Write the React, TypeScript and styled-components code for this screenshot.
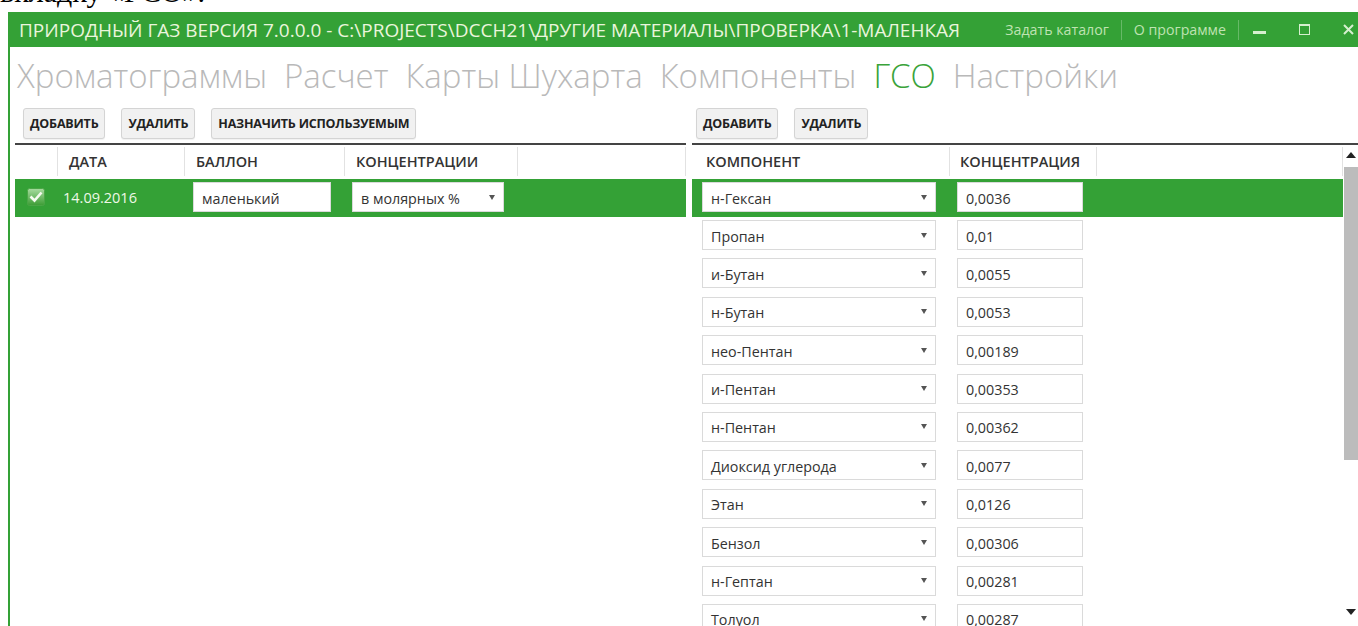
import styled, { createGlobalStyle } from 'styled-components';

const GREEN = '#34a136';

const GlobalStyle = createGlobalStyle`
  html, body {
    margin: 0;
    padding: 0;
    background: #fff;
    overflow: hidden;
  }
  body {
    font-family: 'Open Sans', 'Noto Sans', sans-serif;
    color: #333;
  }
`;

const Page = styled.div`
  width: 1358px;
  height: 626px;
  overflow: hidden;
  display: flex;
  flex-direction: column;
`;

const Caption = styled.div`
  flex: none;
  height: 12px;
  overflow: hidden;
`;

const CaptionText = styled.div`
  font-family: 'Liberation Serif', serif;
  font-size: 30px;
  line-height: 30px;
  margin-top: -23px;
  color: #000;
  white-space: nowrap;
`;

const Window = styled.div`
  flex: 1;
  min-height: 0;
  margin-left: 8px;
  display: flex;
  flex-direction: column;
`;

const TitleBar = styled.div`
  flex: none;
  height: 35px;
  background: ${GREEN};
  display: flex;
  align-items: center;
  padding-left: 11px;
`;

const Title = styled.div`
  font-size: 19px;
  color: #eaf5dc;
  white-space: nowrap;
`;

const TitleActions = styled.div`
  margin-left: auto;
  display: flex;
  align-items: center;
  height: 100%;
`;

const TitleLink = styled.span`
  font-size: 14.2px;
  color: #bfe3b2;
  white-space: nowrap;
`;

const TitleSep = styled.span`
  width: 1px;
  height: 20px;
  background: #67b967;
  margin: 0 12px;
`;

const Controls = styled.div`
  display: flex;
  align-items: center;
  gap: 33px;
  padding: 0 4px 0 2px;
`;

const Minimize = styled.span`
  width: 13px;
  height: 3px;
  margin-top: 6px;
  background: #d6efcf;
`;

const Maximize = styled.span`
  width: 9px;
  height: 8px;
  border: 1px solid #d6efcf;
  border-top-width: 2px;
`;

const Body = styled.div`
  flex: 1;
  min-height: 0;
  border-left: 2px solid ${GREEN};
  display: flex;
  flex-direction: column;
`;

const Tabs = styled.div`
  flex: none;
  display: flex;
  gap: 17px;
  margin-top: 7px;
  padding-left: 7px;
  height: 43px;
`;

const Tab = styled.span<{ $active?: boolean }>`
  font-size: 33px;
  font-weight: 300;
  line-height: 43px;
  color: ${(p) => (p.$active ? '#3aa33a' : '#b9b9b9')};
  white-space: nowrap;
`;

const Panels = styled.div`
  flex: 1;
  min-height: 0;
  display: grid;
  grid-template-columns: 671px 1fr;
  column-gap: 6px;
  padding-left: 5px;
`;

const Panel = styled.div`
  display: flex;
  flex-direction: column;
  min-width: 0;
  overflow: hidden;
`;

const Toolbar = styled.div<{ $indent: number }>`
  flex: none;
  display: flex;
  gap: 16px;
  padding: 11px 0 4px ${(p) => p.$indent}px;
  border-bottom: 2px solid #444;
`;

const Button = styled.button`
  height: 31px;
  padding: 0 6px;
  background: #f1f1f1;
  border: 1px solid #d4d4d4;
  border-radius: 3px;
  box-shadow: 0 1px 1px rgba(0, 0, 0, 0.06);
  font-family: 'Open Sans', sans-serif;
  font-size: 12.5px;
  font-weight: 700;
  letter-spacing: -0.2px;
  color: #222;
  text-transform: uppercase;
`;

const LeftGrid = styled.div`
  flex: none;
  display: grid;
  grid-template-columns: 43px 127px 160px 173px 1fr;
`;

const HeadCell = styled.div<{ $pad?: number; $last?: boolean }>`
  height: 33px;
  display: flex;
  align-items: center;
  padding-left: ${(p) => p.$pad ?? 11}px;
  font-size: 14.5px;
  font-weight: 600;
  color: #333;
  white-space: nowrap;
  position: relative;
  &::after {
    content: '';
    display: ${(p) => (p.$last ? 'none' : 'block')};
    position: absolute;
    right: 0;
    top: 2px;
    bottom: 2px;
    width: 1px;
    background: #e2e2e2;
  }
`;

const Row = styled.div<{ $selected?: boolean; $cols: string }>`
  flex: none;
  display: grid;
  grid-template-columns: ${(p) => p.$cols};
  height: 38.4px;
  align-items: start;
  background: ${(p) => (p.$selected ? GREEN : 'transparent')};
`;

const FirstRow = styled(Row)`
  margin-top: 1px;
  height: 38px;
`;

const Cell = styled.div<{ $pad?: number }>`
  display: flex;
  align-items: center;
  height: 30px;
  margin-top: 3px;
  padding-left: ${(p) => p.$pad ?? 0}px;
`;

const DateText = styled.span`
  font-size: 14.5px;
  color: #eef8e6;
`;

const Field = styled.div<{ $w: number }>`
  box-sizing: border-box;
  width: ${(p) => p.$w}px;
  height: 30px;
  background: #fff;
  border: 1.5px solid #dadada;
  display: flex;
  align-items: center;
  padding: 2px 8px 0;
  font-size: 14.3px;
  color: #333;
  white-space: nowrap;
`;

const Arrow = styled.span`
  margin-left: auto;
  margin-top: -2px;
  width: 0;
  height: 0;
  border-left: 3.5px solid transparent;
  border-right: 3.5px solid transparent;
  border-top: 5px solid #555;
`;

const RightBody = styled.div`
  flex: 1;
  min-height: 0;
  display: grid;
  grid-template-columns: 1fr 15px;
`;

const RightGrid = styled.div`
  display: flex;
  flex-direction: column;
  overflow: hidden;
`;

const RightHead = styled.div`
  flex: none;
  display: grid;
  grid-template-columns: 258px 147px 1fr;
`;

const ScrollBar = styled.div`
  display: flex;
  flex-direction: column;
  align-items: center;
  padding-top: 7px;
`;

const ScrollUp = styled.span`
  width: 0;
  height: 0;
  border-left: 5px solid transparent;
  border-right: 5px solid transparent;
  border-bottom: 6px solid #222;
`;

const ScrollDown = styled.span`
  margin-top: auto;
  margin-bottom: 11px;
  width: 0;
  height: 0;
  border-left: 5px solid transparent;
  border-right: 5px solid transparent;
  border-top: 6px solid #222;
`;

const Thumb = styled.div`
  align-self: stretch;
  margin: 9px 0 0 1px;
  height: 293px;
  background: #bcbcbc;
`;

const CheckIcon = () => (
  <svg width="18" height="18" viewBox="0 0 18 18">
    <defs>
      <linearGradient id="chk" x1="0" y1="0" x2="0" y2="1">
        <stop offset="0" stopColor="#a8dca0" />
        <stop offset="1" stopColor="#3c9c34" />
      </linearGradient>
    </defs>
    <rect x="0.5" y="0.5" width="17" height="17" rx="2" fill="url(#chk)" stroke="#4aa646" />
    <path d="M3.5 8.5 L7.5 12.5 L14.5 4.5" fill="none" stroke="#f4fbef" strokeWidth="2.6" />
  </svg>
);

const CloseIcon = () => (
  <svg width="11" height="11" viewBox="0 0 11 11">
    <path d="M1 1 L10 10 M10 1 L1 10" stroke="#d6efcf" strokeWidth="2" />
  </svg>
);

const components: [string, string][] = [
  ['н-Гексан', '0,0036'],
  ['Пропан', '0,01'],
  ['и-Бутан', '0,0055'],
  ['н-Бутан', '0,0053'],
  ['нео-Пентан', '0,00189'],
  ['и-Пентан', '0,00353'],
  ['н-Пентан', '0,00362'],
  ['Диоксид углерода', '0,0077'],
  ['Этан', '0,0126'],
  ['Бензол', '0,00306'],
  ['н-Гептан', '0,00281'],
  ['Толуол', '0,00287'],
];

const tabs = ['Хроматограммы', 'Расчет', 'Карты Шухарта', 'Компоненты', 'ГСО', 'Настройки'];

const RIGHT_COLS = '258px 147px 1fr';

export default function App() {
  return (
    <Page>
      <GlobalStyle />
      <Caption>
        <CaptionText>вкладку «ГСО».</CaptionText>
      </Caption>
      <Window>
        <TitleBar>
          <Title>ПРИРОДНЫЙ ГАЗ ВЕРСИЯ 7.0.0.0 - C:\PROJECTS\DCCH21\ДРУГИЕ МАТЕРИАЛЫ\ПРОВЕРКА\1-МАЛЕНКАЯ</Title>
          <TitleActions>
            <TitleLink>Задать каталог</TitleLink>
            <TitleSep />
            <TitleLink>О программе</TitleLink>
            <TitleSep />
            <Controls>
              <Minimize />
              <Maximize />
              <CloseIcon />
            </Controls>
          </TitleActions>
        </TitleBar>
        <Body>
          <Tabs>
            {tabs.map((t) => (
              <Tab key={t} $active={t === 'ГСО'}>
                {t}
              </Tab>
            ))}
          </Tabs>
          <Panels>
            <Panel>
              <Toolbar $indent={8}>
                <Button>Добавить</Button>
                <Button>Удалить</Button>
                <Button>Назначить используемым</Button>
              </Toolbar>
              <LeftGrid>
                <HeadCell />
                <HeadCell>ДАТА</HeadCell>
                <HeadCell>БАЛЛОН</HeadCell>
                <HeadCell>КОНЦЕНТРАЦИИ</HeadCell>
                <HeadCell />
              </LeftGrid>
              <FirstRow $selected $cols="43px 127px 160px 173px 1fr">
                <Cell $pad={12}>
                  <CheckIcon />
                </Cell>
                <Cell $pad={5}>
                  <DateText>14.09.2016</DateText>
                </Cell>
                <Cell $pad={8}>
                  <Field $w={138}>маленький</Field>
                </Cell>
                <Cell $pad={7}>
                  <Field $w={152}>
                    в молярных %<Arrow />
                  </Field>
                </Cell>
              </FirstRow>
            </Panel>
            <Panel>
              <Toolbar $indent={4}>
                <Button>Добавить</Button>
                <Button>Удалить</Button>
              </Toolbar>
              <RightBody>
                <RightGrid>
                  <RightHead>
                    <HeadCell $pad={14}>КОМПОНЕНТ</HeadCell>
                    <HeadCell $pad={10}>КОНЦЕНТРАЦИЯ</HeadCell>
                    <HeadCell />
                  </RightHead>
                  {components.map(([name, value], i) => {
                    const RowKind = i === 0 ? FirstRow : Row;
                    return (
                      <RowKind key={name} $selected={i === 0} $cols={RIGHT_COLS}>
                        <Cell $pad={10}>
                          <Field $w={234}>
                            {name}
                            <Arrow />
                          </Field>
                        </Cell>
                        <Cell $pad={7}>
                          <Field $w={126}>{value}</Field>
                        </Cell>
                      </RowKind>
                    );
                  })}
                </RightGrid>
                <ScrollBar>
                  <ScrollUp />
                  <Thumb />
                  <ScrollDown />
                </ScrollBar>
              </RightBody>
            </Panel>
          </Panels>
        </Body>
      </Window>
    </Page>
  );
}
